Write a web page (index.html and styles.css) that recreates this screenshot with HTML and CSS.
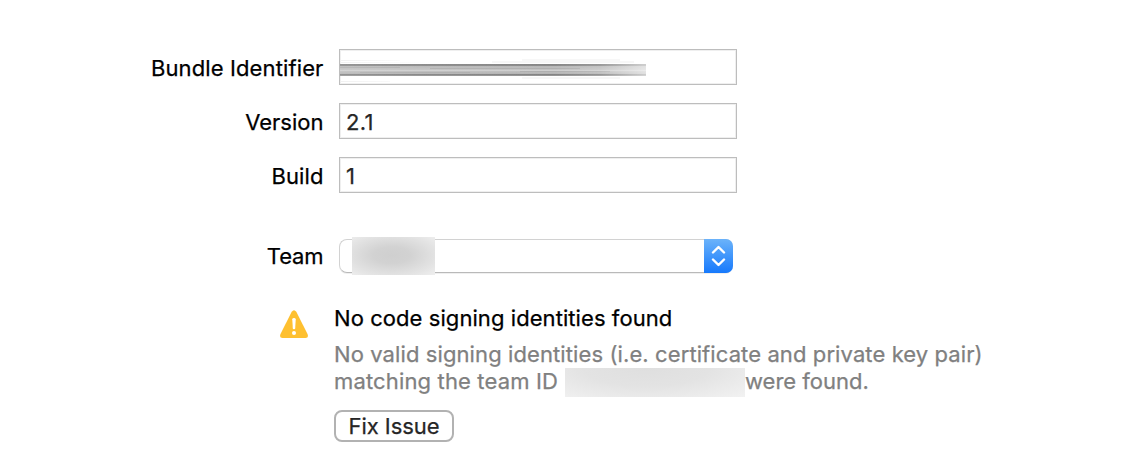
FILE: index.html
```html
<!DOCTYPE html>
<html lang="en">
<head>
<meta charset="utf-8">
<title>Identity</title>
<link rel="stylesheet" href="styles.css">
</head>
<body>
<main class="identity">
  <div class="row"><span class="label label-bundle">Bundle Identifier</span><div class="field field-redacted"><svg class="smear" width="308" height="34" viewBox="0 0 308 34">
    <defs>
      <linearGradient id="bar" x2="0" y2="1"><stop offset="0" stop-color="#858585"/><stop offset=".14" stop-color="#8b8b8b"/><stop offset=".2" stop-color="#b8b8b8"/><stop offset=".5" stop-color="#c4c4c4"/><stop offset=".8" stop-color="#b4b4b4"/><stop offset=".88" stop-color="#808080"/><stop offset="1" stop-color="#a0a0a0"/></linearGradient>
      <linearGradient id="fade"><stop offset="0" stop-color="#fff" stop-opacity=".12"/><stop offset=".25" stop-color="#fff" stop-opacity=".05"/><stop offset=".7" stop-color="#fff" stop-opacity="0"/><stop offset=".85" stop-color="#fff" stop-opacity=".15"/><stop offset="1" stop-color="#fff" stop-opacity=".6"/></linearGradient>
      <linearGradient id="wisp"><stop offset="0" stop-color="#f1f1f1"/><stop offset="1" stop-color="#fff"/></linearGradient>
    </defs>
    <path d="M0 10h60v1H0zM0 12h90v1H0zM0 31h50v1H0z" fill="url(#wisp)"/>
    <path d="M182 10h98M182 28h98" stroke="#f7f7f7" stroke-width="2"/>
    <path d="M152 12h142" stroke="#f7f7f7" stroke-width="2"/>
    <path d="M0 14h306v12H0z" fill="url(#bar)"/>
    <path d="M0 17.5h60M90 18.5h150M20 22.5h110M180 21.5h90" stroke="#aaa" stroke-opacity=".7"/>
    <path d="M0 20.5h306" stroke="#d4d4d4" stroke-opacity=".7"/>
    <path d="M0 14h306v12H0z" fill="url(#fade)"/>
  </svg></div></div>
  <div class="row"><span class="label">Version</span><div class="field">2.1</div></div>
  <div class="row"><span class="label label-build">Build</span><div class="field">1</div></div>
  <div class="row row-team"><span class="label label-team">Team</span>
    <div class="select"><span class="team-blur"></span><span class="stepper"><svg width="29" height="34" viewBox="0 0 29 34"><path d="M9 13.5l5.5-5.5 5.5 5.5M9 20.5l5.5 5.5 5.5-5.5" fill="none" stroke="#fff" stroke-width="2.4" stroke-linecap="round" stroke-linejoin="round"/></svg></span></div>
  </div>
  <section class="issue">
    <svg class="warning" width="28" height="28" viewBox="0 0 28 28"><path d="M11.7 1.8Q14-1.5 16.3 1.8L27.5 24Q29 28 25.5 28H2.5Q-1 28 .5 24z" fill="#fec030"/><path d="M12.3 9.2q0-1.2 1.7-1.2t1.7 1.2l-.5 9.3q-.1.8-1.2.8t-1.2-.8z" fill="#fff"/><circle cx="14" cy="23" r="2" fill="#fff"/></svg>
    <div class="message">
      <div class="title">No code signing identities found</div>
      <div class="detail"><div class="line line-first">No valid signing identities (i.e. certificate and private key pair)</div><div class="line"><span class="match">matching the team ID</span><span class="id-blur"></span><span class="found">were found.</span></div></div>
      <button class="fix">Fix Issue</button>
    </div>
  </section>
</main>
</body>
</html>
```
FILE: styles.css
```css
* { box-sizing: border-box; }
body {
  margin: 0;
  background: #fff;
  color: #000;
  font: 22px/27px Inter, "Liberation Sans", sans-serif;
  -webkit-text-stroke: .25px currentColor;
}
.identity { padding-top: 49px; }
.row {
  display: grid;
  grid-template-columns: 323.5px 398px;
  column-gap: 15.5px;
  align-items: center;
  height: 36px;
  margin-bottom: 18px;
}
.label { text-align: right; white-space: nowrap; padding-top: 2px; }
.label-bundle { letter-spacing: .12px; }
.label-build { letter-spacing: .1px; }
.label-team { padding-top: 0; letter-spacing: -.1px; }
.field {
  height: 36px;
  padding: 5px 6px 2px;
  border: 1px solid #bdbdbd;
  box-shadow: inset 0 0 0 1px #efefef;
  color: #262626;
  letter-spacing: .3px;
}
.field-redacted { padding: 0; }
.smear { display: block; }
.row-team { height: 34px; margin-top: 46px; margin-bottom: 37px; }
.select {
  display: flex;
  align-items: center;
  justify-content: space-between;
  width: 394px;
  height: 34px;
  padding-left: 12px;
  border: solid #d2d2d2;
  border-width: 1px 0 1px 1px;
  border-bottom-color: #b9b9b9;
  border-radius: 8px;
  box-shadow: 0 1px 0 #efefef;
}
.team-blur {
  width: 83px;
  height: 38px;
  background: radial-gradient(ellipse at 48% 48%, #cfcfcf 0, #d2d2d2 30%, #e4e4e4 75%, #efefef 100%);
}
.stepper {
  width: 29px;
  height: 34px;
  border-radius: 0 7px 7px 0;
  background: linear-gradient(#6bb3fa, #1679fc);
}
.stepper svg { display: block; }
.issue {
  display: grid;
  grid-template-columns: 28px 660px;
  column-gap: 26px;
  padding-left: 280px;
}
.message { white-space: nowrap; margin-top: -5px; }
.title { height: 36px; letter-spacing: .07px; }
.detail { color: #808080; }
.line { display: flex; height: 27px; }
.line-first { letter-spacing: .1px; }
.match { width: 231px; letter-spacing: .15px; }
.id-blur {
  width: 180px;
  height: 29px;
  background: radial-gradient(ellipse at 45% 0, #dfdfdf, #e3e3e3 45%, #f2f2f2 100%);
}
.fix {
  display: block;
  width: 120px;
  height: 32px;
  margin-top: 15px;
  padding: 0;
  border: 2px solid #b2b2b2;
  border-radius: 8px;
  background: #fff;
  color: #262626;
  font: inherit;
  letter-spacing: -.05px;
  -webkit-text-stroke: .25px currentColor;
}
```
